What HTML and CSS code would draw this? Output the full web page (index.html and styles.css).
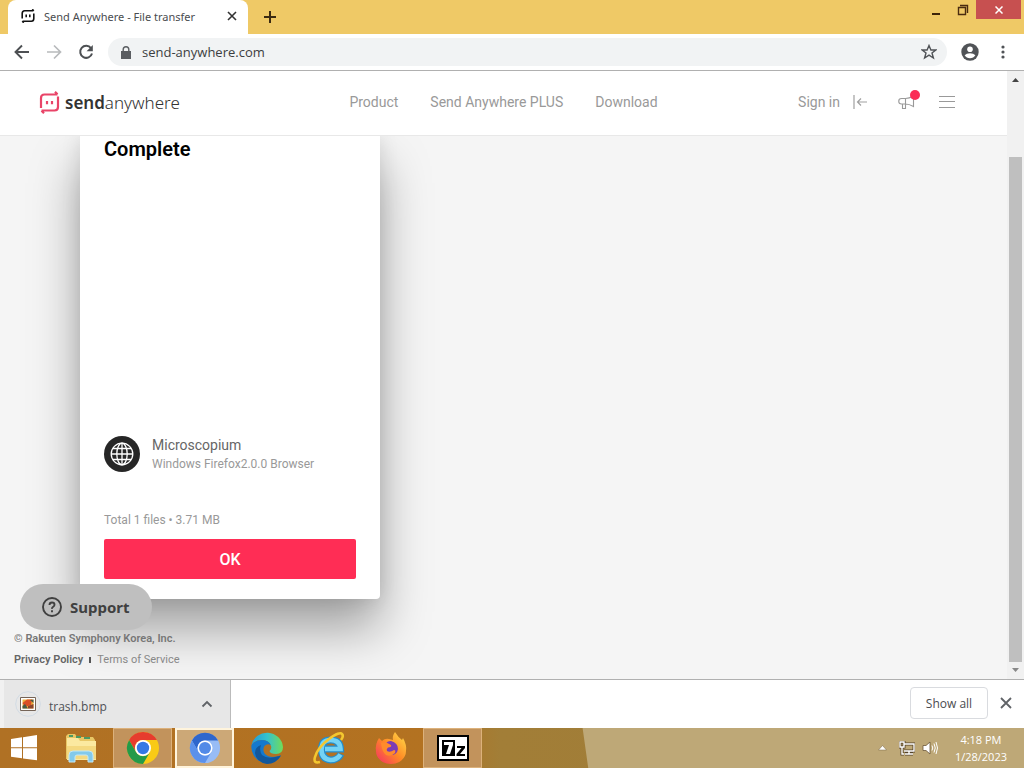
FILE: index.html
```html
<!DOCTYPE html>
<html lang="en">
<head>
<meta charset="utf-8">
<title>Send Anywhere - File transfer</title>
<link rel="stylesheet" href="styles.css">
</head>
<body>
<div class="desktop">
  <div class="tabstrip">
    <div class="tab">
      <svg class="tab-icon" width="14" height="14" viewBox="0 0 14 14" fill="none" stroke="#111" stroke-width="1.6"><path d="M1.200 9.500V4.500Q1.200 1.800 3.700 1.800H12.500M11.200.300L12.800 1.800M12.800 4.500V9.500Q12.800 12.200 10.300 12.200H1.500M2.800 13.700L1.200 12.200M5.200 5.500V8.200M8.800 5.500V8.200"/></svg>
      <span class="tab-title">Send Anywhere - File transfer</span>
      <button class="plain" aria-label="Close tab"><svg width="10" height="10" viewBox="0 0 10 10" stroke="#333" stroke-width="1.600"><path d="M1 1L9 9M9 1L1 9"/></svg></button>
    </div>
    <button class="plain new-tab" aria-label="New tab"><svg width="14" height="14" viewBox="0 0 14 14" stroke="#3b2a12" stroke-width="2"><path d="M7 1V13M1 7H13"/></svg></button>
    <div class="window-controls">
      <button class="plain win" aria-label="Minimize"><svg width="10" height="12" viewBox="0 0 10 12"><path d="M1 9h8v2H1z" fill="#3d2408"/></svg></button>
      <button class="plain win" aria-label="Restore"><svg width="12" height="12" viewBox="0 0 12 12" fill="none" stroke="#4a2c10"><path d="M3 1.500H10.500V9M1.500 3.500H8.500V10.500H1.500Z" stroke-width="1.400"/></svg></button>
      <button class="plain win-close" aria-label="Close"><svg width="8" height="8" viewBox="0 0 8 8" stroke="#fff" stroke-width="1.500"><path d="M.500.500L7.500 7.500M7.500.500L.500 7.500"/></svg></button>
    </div>
  </div>

  <div class="toolbar">
    <button class="plain" aria-label="Back"><svg width="16" height="16" viewBox="0 0 16 16" fill="none" stroke="#4d5053" stroke-width="1.900"><path d="M15 8H2M8 1.500L1.500 8L8 14.500"/></svg></button>
    <button class="plain" aria-label="Forward"><svg width="16" height="16" viewBox="0 0 16 16" fill="none" stroke="#b8babc" stroke-width="1.700"><path d="M1 8H14M8 1.500L14.500 8L8 14.500"/></svg></button>
    <button class="plain" aria-label="Reload"><svg width="16" height="16" viewBox="0 0 16 16"><path d="M13 4.200A6 6 0 1 0 14 9.500" fill="none" stroke="#4d5053" stroke-width="2"/><path d="M14.800 1V7.200H8.600Z" fill="#4d5053"/></svg></button>
    <div class="omnibox">
      <svg width="10" height="13" viewBox="0 0 10 13"><path d="M0 5h10v8H0z" fill="#5a5d61"/><path d="M2.200 5.500V3.600a2.800 2.800 0 0 1 5.600 0V5.500" fill="none" stroke="#5a5d61" stroke-width="1.400"/></svg>
      <input class="address" type="text" aria-label="Address" value="send-anywhere.com">
      <button class="plain" aria-label="Bookmark"><svg width="16" height="16" viewBox="0 0 16 16" fill="none" stroke="#505357" stroke-width="1.400"><path d="M8 1.500L9.900 6H14.800L11 9L12.400 14L8 11.200L3.600 14L5 9L1.200 6H6.100Z"/></svg></button>
    </div>
    <button class="plain" aria-label="Profile"><svg width="18" height="18" viewBox="0 0 18 18"><circle cx="9" cy="9" r="8.700" fill="#505357"/><circle cx="9" cy="6.200" r="2.800" fill="#fff"/><path d="M3.600 12.300Q5.500 10.300 9 10.300T14.400 12.300Q12.500 15.300 9 15.300T3.600 12.300Z" fill="#fff"/></svg></button>
    <button class="plain menu-dots" aria-label="Browser menu"><svg width="4" height="14" viewBox="0 0 4 14" fill="#505357"><circle cx="2" cy="2" r="1.600"/><circle cx="2" cy="7" r="1.600"/><circle cx="2" cy="12" r="1.600"/></svg></button>
  </div>

  <div class="viewport">
    <div class="page">
      <header class="site-header">
        <a class="logo" href="#">
          <svg width="21" height="23" viewBox="0 0 21 23" fill="none" stroke="#e94468" stroke-width="2.200"><path d="M2 17V7Q2 3.500 5.500 3.500H18.500M16 .800L18.500 3.300M19 5.500V16Q19 19.500 15.500 19.500H2.500M5 22.200L2.500 19.700M8 10V13.200M13 10V13.200"/></svg>
          <span class="wordmark"><b>send</b>anywhere</span>
        </a>
        <nav class="main-nav">
          <a href="#">Product</a>
          <a href="#">Send Anywhere PLUS</a>
          <a href="#">Download</a>
        </nav>
        <div class="account">
          <a class="signin" href="#">Sign in <svg width="14" height="14" viewBox="0 0 14 14" fill="none" stroke="#a0a0a0" stroke-width="1.200"><path d="M1 0V14M14 7H4.500M8 3.500L4.500 7L8 10.500"/></svg></a>
          <button class="plain notice" aria-label="Notices"><svg width="17" height="15" viewBox="0 0 17 15" fill="none" stroke="#999" stroke-width="1.100"><path d="M7.500 3.500H3.500A2.700 2.700 0 0 0 3.500 9H7.500M7.500 3.500V9Q11 9 15.500 11.500V1Q11 3.500 7.500 3.500M4.500 9V13.500H7.500V9"/></svg><span class="dot"></span></button>
          <button class="plain" aria-label="Menu"><svg width="16" height="12" viewBox="0 0 16 12" stroke="#999" stroke-width="1"><path d="M0 .500H16M0 5.500H16M0 11.500H16"/></svg></button>
        </div>
      </header>
      <main class="content">
        <section class="card">
          <h1>Complete</h1>
          <div class="device">
            <svg width="36" height="36" viewBox="0 0 36 36" fill="none" stroke="#fff" stroke-width="1.300"><circle cx="18" cy="18" r="18" fill="#262626" stroke="none"/><circle cx="18" cy="18" r="10.800"/><ellipse cx="18" cy="18" rx="5.200" ry="10.800"/><path d="M18 7V29M7 18H29M9 12.500H27M9 23.500H27"/></svg>
            <div>
              <p class="device-name">Microscopium</p>
              <p class="device-info">Windows Firefox2.0.0 Browser</p>
            </div>
          </div>
          <p class="total">Total 1 files • 3.71 MB</p>
          <button class="ok">OK</button>
        </section>
        <footer class="site-footer">
          <p class="copyright">© Rakuten Symphony Korea, Inc.</p>
          <p class="legal"><a class="privacy" href="#">Privacy Policy</a><span class="bar"></span><a href="#">Terms of Service</a></p>
        </footer>
      </main>
      <button class="support"><svg width="20" height="20" viewBox="0 0 20 20" fill="none" stroke="#404040" stroke-width="1.900"><circle cx="10" cy="10" r="9"/><path d="M7.500 8Q7.500 5.500 10 5.500T12.500 7.800Q12.500 9 11.200 9.800T10 11.800M10 13.200V15.200"/></svg>Support</button>
    </div>
    <div class="scrollbar">
      <svg width="17" height="17" viewBox="0 0 17 17"><path d="M8.500 7L12 11H5Z" fill="#444"/></svg>
      <div class="track"><div class="thumb"></div></div>
      <svg width="17" height="17" viewBox="0 0 17 17"><path d="M5 6H12L8.500 10Z" fill="#888"/></svg>
    </div>
  </div>

  <div class="downloads">
    <div class="download">
      <svg width="26" height="26" viewBox="0 0 26 26"><circle cx="13" cy="13" r="12.300" fill="none" stroke="#d2dbe4"/><path d="M5.500 6.500h15v13h-15z" fill="#fff" stroke="#756457"/><path d="M7.500 8.500h11v9h-11z" fill="#efb33c"/><path d="M7.500 12L12 8.500H17L16 14L10 16Z" fill="#d94f26"/><path d="M7.500 15L10 13L13 17.500H7.500ZM15 9L18.500 12V8.500Z" fill="#465b46"/><path d="M13 15L18.500 13V17.500H13Z" fill="#8a452e"/></svg>
      <span class="file">trash.bmp</span>
      <button class="plain" aria-label="Download options"><svg width="12" height="8" viewBox="0 0 12 8" fill="none" stroke="#606367" stroke-width="1.800"><path d="M1.500 6.500L6 2L10.500 6.500"/></svg></button>
    </div>
    <div class="download-actions">
      <button class="show-all">Show all</button>
      <button class="plain" aria-label="Close downloads"><svg width="12" height="12" viewBox="0 0 12 12" stroke="#606367" stroke-width="1.800"><path d="M1 1L11 11M11 1L1 11"/></svg></button>
    </div>
  </div>

  <div class="taskbar">
    <button class="task start" aria-label="Start"><svg width="28" height="26" viewBox="0 0 28 26" fill="#fff"><path d="M1 4L12 2.300V12.300H1ZM13 2.200L27 0V12.300H13ZM1 13.300H12V23.300L1 21.800ZM13 13.300H27V25.300L13 23.500Z"/></svg></button>
    <button class="task" aria-label="File Explorer"><svg width="34" height="32" viewBox="0 0 34 32"><path d="M2 4L4 2H11L13 5H29L31 8V27H2Z" fill="#e8c766"/><path d="M5 4H9M12 5H17M20 6H26" stroke="#4b9a64" stroke-width="2"/><path d="M3 6H14L16 9H32V28H3Z" fill="#fbe9a0"/><path d="M3 14H32V27H3Z" fill="#f4d980"/><path d="M5 30V23Q5 19 9 19H25Q29 19 29 23V30H24V25Q24 23 22 23H13Q11 23 11 25V30Z" fill="#83caeb" stroke="#c4e8f5"/></svg></button>
    <button class="task open" aria-label="Google Chrome"><svg width="34" height="34" viewBox="0 0 34 34"><circle cx="17" cy="17" r="16" fill="#f9ca16"/><path d="M3.100 9A16 16 0 0 1 30.900 9H17A8 8 0 0 0 10 21Z" fill="#e63c2e"/><path d="M3.100 9A16 16 0 0 0 17 33L24 21A8 8 0 0 1 10 21Z" fill="#249a49"/><circle cx="17" cy="17" r="8" fill="#fff"/><circle cx="17" cy="17" r="6.200" fill="#3478e5"/></svg></button>
    <button class="task open active" aria-label="Chromium"><svg width="32" height="32" viewBox="0 0 34 34"><circle cx="17" cy="17" r="16" fill="#98bcf6"/><path d="M3.100 9A16 16 0 0 1 30.900 9H17A8 8 0 0 0 10 21Z" fill="#2e66cc"/><path d="M3.100 9A16 16 0 0 0 17 33L24 21A8 8 0 0 1 10 21Z" fill="#5b91eb"/><circle cx="17" cy="17" r="8" fill="#fff"/><circle cx="17" cy="17" r="6.400" fill="#528ae7"/></svg></button>
    <button class="task" aria-label="Microsoft Edge"><svg width="34" height="34" viewBox="0 0 34 34"><defs><linearGradient id="edge-top"><stop offset="0" stop-color="#239ad8"/><stop offset=".5" stop-color="#35c2cd"/><stop offset="1" stop-color="#70dc58"/></linearGradient></defs><path d="M1.500 14A16 16 0 0 1 33 16Q33 23 26 23Q20 23 19.500 20Q22 18 21 15Q19 9 12 9Q5 9 1.500 14Z" fill="url(#edge-top)"/><path d="M1.500 14Q5 9 12 9Q18 9 21 14Q17 12 14.500 15Q12 19 15 23Q20 28 31 24.500A16 16 0 0 1 1.500 14Z" fill="#1479cd"/><path d="M11 14Q9 19 12 24Q18 29 31 24.500Q26 33 17 33Q6 31 5 22Q5 16 11 14Z" fill="#12579a"/></svg></button>
    <button class="task" aria-label="Internet Explorer"><svg width="34" height="34" viewBox="0 0 34 34" fill="none"><path d="M29 23Q26 29 18.500 29Q9.500 28 9.500 18.500T18.500 9Q28 9 28.500 18H13" stroke="#258dcc" stroke-width="7"/><path d="M28.500 23.500Q25 29 18.500 29Q9.500 28 9.500 18.500T18.500 9Q28 9 28.500 18H13" stroke="#74d3f4" stroke-width="4.600"/><path d="M8 31Q1 33 3 26Q6 16 17 8T30 3Q32 5 29 9" stroke="#f4c72f" stroke-width="2.600"/></svg></button>
    <button class="task" aria-label="Firefox"><svg width="34" height="34" viewBox="0 0 34 34"><defs><linearGradient id="fox" x1="1" x2="0" y2="1"><stop offset="0" stop-color="#ffe14a"/><stop offset=".5" stop-color="#ff8a25"/><stop offset="1" stop-color="#f52b67"/></linearGradient></defs><path d="M5 7L8 10Q11 7 15 8L19 9Q18 5 21 1Q24 6 28 9L29 7Q33 14 32 20A15 13 0 0 1 2 20Q1 13 5 7Z" fill="url(#fox)"/><path d="M12 14Q12 10 17 10Q24 12 24 18Q23 24 17 24Q12 23 11 18Z" fill="#7c3cb6"/><path d="M7 12Q11 10 17 14Q18 16 14 16.500Q12 18 13 20Q16 22 20 19Q22 19 21 22Q17 26 12 24Q8 21 7 12Z" fill="#ff8b2b"/></svg></button>
    <button class="task open" aria-label="7-Zip"><svg width="32" height="26" viewBox="0 0 32 26"><path d="M0 0H32V26H0Z"/><path d="M2 2H30V24H2Z" fill="#fff"/><path d="M5 5H18V21H5Z"/><path d="M7 7H16V10L13 19H9L12 10H7Z" fill="#fff"/><path d="M20 11H28V13L23 19H28V21H19.500V19L24.500 13H20Z"/></svg></button>
    <div class="tray">
      <svg width="9" height="6" viewBox="0 0 9 6"><path d="M4.500.500L8.500 5H.500Z" fill="#fff" stroke="#776444" stroke-width=".5"/></svg>
      <svg class="network" width="16" height="15" viewBox="0 0 16 15" fill="none"><path d="M5 3H15V10H5M10 10V13M6 13H14M1 1H5V6H1ZM3 6V13H5" stroke="#554329" stroke-width="3"/><path d="M5 3H15V10H5M10 10V13M6 13H14M1 1H5V6H1ZM3 6V13H5" stroke="#fff" stroke-width="1.400"/></svg>
      <svg width="16" height="14" viewBox="0 0 16 14" fill="none"><path d="M1 4.500H4L8 1V13L4 9.500H1Z" fill="#fff" stroke="#6b5738" stroke-width=".8"/><path d="M10 4.500Q11.500 7 10 9.500M12 2.500Q14.500 7 12 11.500M14 1Q17 7 14 13" stroke="#fff"/></svg>
      <div class="clock"><span>4:18 PM</span><span>1/28/2023</span></div>
    </div>
  </div>
</div>
</body>
</html>
```
FILE: styles.css
```css
* { box-sizing: border-box; }
body { margin: 0; font-family: Roboto, "Liberation Sans", sans-serif; }
h1, p { margin: 0; }
a { color: inherit; text-decoration: none; }
svg { display: block; flex: none; }
button { font-family: inherit; }
.plain { display: flex; align-items: center; justify-content: center; padding: 0; border: 0; background: none; }

.desktop { display: flex; flex-direction: column; height: 100vh; overflow: hidden; background: #fff; }

/* Browser frame */
.tabstrip { display: flex; flex: none; height: 34px; padding-left: 8px; background: #efc966; font-family: "Open Sans", "Noto Sans", sans-serif; }
.tab { display: flex; align-items: center; width: 240px; padding: 0 11px 2px 13px; border-radius: 8px 8px 0 0; background: #fff; }
.tab-icon { margin-right: 9px; }
.tab-title { flex: 1; color: #4a4c4f; font-family: "Noto Sans", sans-serif; font-size: 11px; white-space: nowrap; }
.new-tab { width: 44px; }
.window-controls { display: flex; align-items: flex-start; margin-left: auto; padding-right: 3px; }
.win { width: 27px; height: 19px; }
.win-close { width: 45px; height: 19px; background: #c75050; }

.toolbar { display: flex; flex: none; align-items: center; gap: 16px; height: 37px; padding: 0 14px; border-bottom: 1px solid #b0b0b0; }
.omnibox { display: flex; flex: 1; align-items: center; gap: 11px; height: 28px; margin: 0 -2px; padding: 0 10px 0 13px; border-radius: 14px; background: #f1f3f4; }
.address { flex: 1; min-width: 0; padding: 0; border: 0; outline: 0; background: none; color: #3c3e41; font: 13px "Open Sans", "Noto Sans", sans-serif; }
.menu-dots { width: 15px; }

/* Web page */
.viewport { display: flex; flex: 1; min-height: 0; border-bottom: 1px solid #b0b0b0; }
.page { position: relative; display: flex; flex: 1; flex-direction: column; min-width: 0; background: #f5f5f5; overflow: hidden; }
.site-header { z-index: 1; display: grid; grid-template-columns: 1fr auto 1fr; flex: none; align-items: center; height: 65px; padding: 0 39px 2px; border-bottom: 1px solid #e8e8e8; background: #fff; color: #999; font-size: 14px; }
.logo { display: flex; align-items: center; gap: 5px; color: #333; }
.wordmark { font-family: "Noto Sans", sans-serif; font-size: 17px; font-weight: 300; }
.wordmark b { font-weight: 600; }
.main-nav { display: flex; gap: 32px; }
.account { display: flex; align-items: center; justify-content: flex-end; padding-right: 13px; }
.signin { display: flex; align-items: center; gap: 13px; margin-right: 31px; }
.notice { position: relative; margin-right: 24px; }
.dot { position: absolute; top: -5px; right: -5px; width: 10px; height: 10px; border-radius: 50%; background: #fa2c55; }

.content { flex: 1; min-height: 0; }
.card { width: 300px; margin-left: 80px; padding: 0 24px 20px; border-radius: 0 0 4px 4px; background: #fff; box-shadow: 0 30px 50px rgba(0, 0, 0, .35), 0 0 20px rgba(0, 0, 0, .1); }
.card h1 { font-size: 20px; font-weight: 600; line-height: 26px; }
.device { display: flex; align-items: center; gap: 12px; margin-top: 273px; }
.device-name { color: #666; font-size: 14px; line-height: 20px; }
.device-info { color: #999; font-size: 12px; line-height: 18px; }
.total { margin-top: 38px; color: #999; font-size: 12px; line-height: 18px; }
.ok { display: block; width: 100%; height: 40px; margin-top: 10px; border: 0; border-radius: 2px; background: #ff2d55; color: #fff; font-size: 16px; font-weight: 500; }
.site-footer { position: relative; padding: 31px 14px 0; color: #777; font-size: 11px; line-height: 18px; }
.copyright, .privacy { font-weight: 600; }
.legal { display: flex; align-items: center; margin-top: 3px; color: #888; }
.privacy { color: #666; }
.bar { width: 2px; height: 6px; margin: 0 6px; background: #555; }
.support { position: absolute; bottom: 49px; left: 20px; display: flex; align-items: center; gap: 8px; height: 46px; padding: 0 22px; border: 0; border-radius: 23px; background: #bfbfbf; color: #404040; font: 700 15px "Noto Sans", sans-serif; }

.scrollbar { display: flex; flex: none; flex-direction: column; width: 17px; background: #f1f1f1; }
.track { display: flex; flex: 1; flex-direction: column; justify-content: flex-end; padding: 0 2px; }
.thumb { height: 88%; background: #bfbfbf; }

/* Download shelf */
.downloads { display: flex; flex: none; justify-content: space-between; height: 48px; font-family: "Open Sans", "Noto Sans", sans-serif; }
.download { display: flex; align-items: center; width: 231px; padding: 0 17px 0 11px; border-right: 1px solid #bbb; border-left: 4px solid #f1f1f1; background: #e7e7e7; }
.file { flex: 1; padding: 4px 0 0 8px; color: #505256; font-size: 12px; }
.download-actions { display: flex; align-items: center; gap: 12px; padding: 0 12px 2px 0; }
.show-all { width: 78px; height: 32px; padding: 0; border: 1px solid #d9dbdf; border-radius: 4px; background: #fff; color: #4a4c50; font-size: 12px; font-weight: 500; }

/* Windows taskbar */
.taskbar { display: flex; flex: none; align-items: center; gap: 3px; height: 40px; padding-right: 17px; background: linear-gradient(82deg, transparent 0 582px, #bea877 583px), linear-gradient(90deg, #b07124 0, #b37221 430px, #a27e37 500px, #9e7b39 100%); }
.task { display: flex; flex: none; align-items: center; justify-content: center; width: 59px; height: 40px; padding: 0; border: 0; background: none; }
.start { width: 48px; }
.open { border: 1px solid #dcb17b; background: #c2935c; }
.active { border: 2px solid #fff4dc; background: #cca877; }
.tray { display: flex; align-items: center; margin-left: auto; color: #fff; font-family: "Open Sans", "Noto Sans", sans-serif; font-size: 11px; line-height: 17px; }
.network { margin: 0 7px 0 12px; }
.clock { display: flex; flex-direction: column; align-items: center; margin-left: 17px; }
```
